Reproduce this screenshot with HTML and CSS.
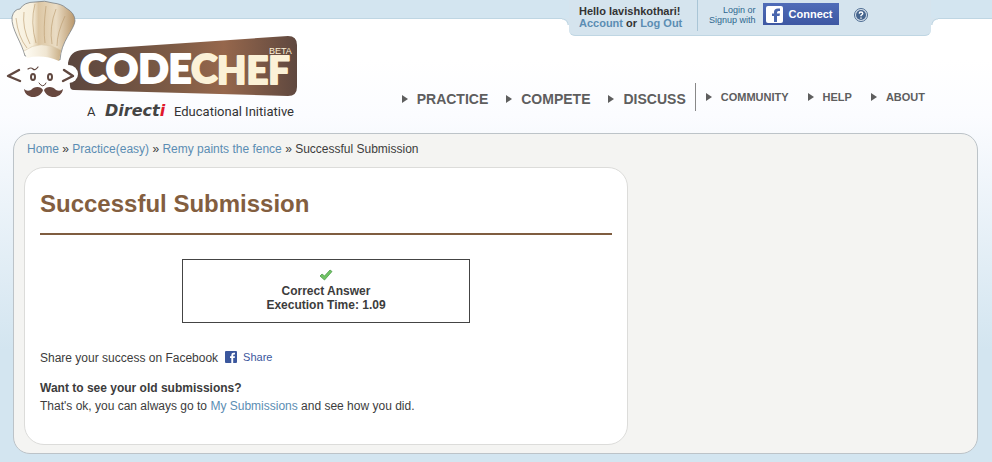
FILE: index.html
```html
<!DOCTYPE html>
<html lang="en">
<head>
<meta charset="utf-8">
<title>Successful Submission | CodeChef</title>
<link rel="stylesheet" href="styles.css">
</head>
<body>
<header class="header">
  <a class="logo" href="#" aria-label="CodeChef home">
    <svg width="305" height="125" viewBox="0 0 305 125">
      <defs>
        <linearGradient id="wood">
          <stop offset="0" stop-color="#5b463e"/>
          <stop offset=".45" stop-color="#7d5b45"/>
          <stop offset=".68" stop-color="#96674c"/>
          <stop offset="1" stop-color="#5f483f"/>
        </linearGradient>
        <linearGradient id="hat">
          <stop offset="0" stop-color="#fbf6e8"/>
          <stop offset=".33" stop-color="#f6eedb"/>
          <stop offset=".42" stop-color="#dcc6a3"/>
          <stop offset=".7" stop-color="#eadcc4"/>
          <stop offset="1" stop-color="#b9976b"/>
        </linearGradient>
        <linearGradient id="band">
          <stop offset="0" stop-color="#fffdf5"/>
          <stop offset=".6" stop-color="#f0e6d2"/>
          <stop offset="1" stop-color="#c9ae85"/>
        </linearGradient>
      </defs>
      <path d="M82 50 288 36Q297 36 297 45V87Q297 96 288 96L74 90Q70 90 70 86L68 63Q70 51 82 50Z" fill="url(#wood)"/>
      <circle cx="69" cy="74" r="9" fill="#fff"/>
      <ellipse cx="43" cy="73" rx="27" ry="18" fill="#fff"/>
      <path d="M25 56C22 43 11 29 12 17Q14 9 20 9Q24 2 35 2Q45 0 53 3Q62 4 66 8Q75 13 75 21C74 30 61 41 60 60Q44 52 25 56Z" fill="url(#hat)" stroke="#7c8185" stroke-width=".8"/>
      <path d="M24 51Q40 39 61 50L59 61Q43 54 27 58Z" fill="url(#band)"/>
      <path d="M24 51Q40 39 61 50" fill="none" stroke="#d9c8a8" stroke-width=".6"/>
      <path d="M16 18Q18 37 27 48M24 12Q22 28 30 44M35 4Q30 22 36 43M46 6Q43 29 45 43M56 9Q49 27 52 44M65 16Q57 33 57 46" fill="none" stroke="#b99a6d" stroke-width="1" opacity=".6"/>
      <g fill="none" stroke="#604840" stroke-linecap="round" stroke-linejoin="round">
        <path d="M19 70 8 76l12 5M64 70l9 6-10 5" stroke-width="2.4"/>
        <path d="M28 69q3-2 5 0t5-2" stroke-width="1.2"/>
        <ellipse cx="33" cy="77" rx="2" ry="3" stroke-width="2"/>
        <ellipse cx="50" cy="77" rx="2" ry="3" stroke-width="2"/>
        <path d="M39 83q4 6 7 0" stroke-width="1"/>
      </g>
      <path d="M43 90C41 86 34 86 31 90Q27 92 24 89C25 99 40 100 43 90ZM44 90C46 86 53 86 56 90Q60 92 63 89C62 99 47 100 44 90Z" fill="#68483f"/>
      <text class="logo-name" x="80" y="83" fill="#fff" stroke="#fff">CODE<tspan fill="#fbf1d7" stroke="#fbf1d7">C</tspan></text>
      <text class="logo-name logo-name-end" x="217" y="84" fill="#fbf1d7" stroke="#fbf1d7">HEF</text>
      <text class="logo-beta" x="269" y="54" fill="#fbf1d7">BETA</text>
      <text class="logo-line" x="87" y="116">A</text>
      <text class="logo-brand" x="105" y="116" fill="#444">Direct<tspan fill="#e0182d">i</tspan></text>
      <text class="logo-line" x="174" y="116">Educational Initiative</text>
    </svg>
  </a>
  <div class="header-side">
    <div class="account">
      <div class="greeting">Hello lavishkothari!<br><a href="#">Account</a> or <a href="#">Log Out</a></div>
      <div class="signup">
        <label class="signup-label" for="connect">Login or<br>Signup with</label>
        <button class="connect" id="connect" type="button">
          <svg width="17" height="17" viewBox="0 0 17 17" aria-hidden="true"><rect width="17" height="17" rx="2" fill="#fff"/><path d="M8 16V10H6V7.500H8V6Q8 2.500 12 2.500H14V5H12.500Q11 5 11 6.500V7.500H14L13.500 10H11V16Z" fill="#4a66ae"/></svg>
          Connect
        </button>
        <a class="help" href="#" aria-label="Help">
          <svg width="14" height="14" viewBox="0 0 14 14"><circle cx="7" cy="7" r="6.500" fill="#d8e2ec" stroke="#4d6c92"/><circle cx="7" cy="7" r="5" fill="#46658e"/><path d="M5.200 5.600Q5.300 4 7 4T8.800 5.500Q8.800 6.400 7 7.500V8.200M7 9.400V10.700" fill="none" stroke="#fff" stroke-width="1.400"/></svg>
        </a>
      </div>
    </div>
    <nav class="nav">
      <ul class="nav-main">
        <li><a href="#">PRACTICE</a></li>
        <li><a href="#">COMPETE</a></li>
        <li><a href="#">DISCUSS</a></li>
      </ul>
      <ul class="nav-more">
        <li><a href="#">COMMUNITY</a></li>
        <li><a href="#">HELP</a></li>
        <li><a href="#">ABOUT</a></li>
      </ul>
    </nav>
  </div>
</header>
<main class="main">
  <nav class="breadcrumb"><a href="#">Home</a> » <a href="#">Practice(easy)</a> » <a href="#">Remy paints the fence</a> » Successful Submission</nav>
  <section class="card">
    <h1>Successful Submission</h1>
    <div class="result">
      <svg width="14" height="12" viewBox="0 0 14 12" aria-hidden="true"><path d="M1 7 3 5 5.500 7 11 1 13 2.500 5.500 11Z" fill="#72c465" stroke="#4d9c4b" stroke-width=".8" stroke-linejoin="round"/></svg>
      <div>Correct Answer</div>
      <div>Execution Time: 1.09</div>
    </div>
    <p class="share">Share your success on Facebook
      <a class="share-link" href="#"><svg width="12" height="12" viewBox="0 0 12 12" aria-hidden="true"><rect width="12" height="12" rx="1" fill="#3b579d"/><path d="M6.300 12V7H5V5.200H6.300V4Q6.300 1.800 8.700 1.800H10V3.600H9Q8.200 3.600 8.200 4.300V5.200H10L9.700 7H8.200V12Z" fill="#fff"/></svg>Share</a>
    </p>
    <h2>Want to see your old submissions?</h2>
    <p>That's ok, you can always go to <a href="#">My Submissions</a> and see how you did.</p>
  </section>
</main>
</body>
</html>
```

FILE: styles.css
```css
* {
  box-sizing: border-box;
}

body {
  margin: 0;
  padding-bottom: 8px;
  font: 12px/18px "Liberation Sans", Arial, sans-serif;
  color: #3c3c3c;
  background: #d3e5f0 linear-gradient(#fff 60px, #fbfcff 116px, #f1f6fb 175px, #d3e5f0 350px) no-repeat 0 0 / 100% 350px;
}

a {
  color: #5b8db3;
  text-decoration: none;
}

h1, h2, p, ul {
  margin: 0;
  padding: 0;
}

ul {
  list-style: none;
}

/* Header */
.header {
  display: flex;
  justify-content: space-between;
  min-height: 133px;
  background: linear-gradient(#d3e5f0 18px, #bfd6e3 18px, #bfd6e3 19px, transparent 19px);
}

.logo svg {
  display: block;
}

.logo-name {
  font: 900 40px Lato, sans-serif;
  stroke-width: 2px;
  stroke-linejoin: round;
}

.logo-name-end {
  font-size: 38px;
}

.logo-beta {
  font: 9px "Liberation Sans", sans-serif;
}

.logo-line {
  font: 13px Roboto, sans-serif;
  fill: #333;
}

.logo-brand {
  font: italic bold 16px "DejaVu Sans", sans-serif;
}

.header-side {
  display: flex;
  flex-direction: column;
  align-items: flex-end;
  padding-right: 61px;
}

.account {
  position: relative;
  display: flex;
  width: 362px;
  height: 36px;
  padding-left: 10px;
  background: #d5e4ee;
  border-bottom: 1px solid #bfd6e3;
  border-radius: 0 0 6px 6px;
}

.account::before,
.account::after {
  content: "";
  position: absolute;
  top: 18px;
  width: 7px;
  height: 7px;
}

.account::before {
  left: -7px;
  background: radial-gradient(circle at 0 100%, #fff 5px, #bfd6e3 6px, #d5e4ee 7px);
}

.account::after {
  right: -7px;
  background: radial-gradient(circle at 100% 100%, #fff 5px, #bfd6e3 6px, #d5e4ee 7px);
}

.greeting {
  width: 119px;
  height: 31px;
  padding-top: 5px;
  font-size: 11px;
  font-weight: bold;
  line-height: 12px;
  color: #333;
  border-right: 1px solid #a9c5d6;
}

.signup {
  display: flex;
  flex: 1;
  align-items: flex-start;
  padding: 3px 0 0 11px;
}

.signup-label {
  margin: 2px 7px 0 0;
  font-size: 9px;
  line-height: 10px;
  text-align: right;
  color: #2f678f;
}

.connect {
  display: flex;
  align-items: center;
  gap: 6px;
  height: 22px;
  padding: 0 6px 0 3px;
  font: bold 11px "Liberation Sans", Arial, sans-serif;
  color: #fff;
  background: linear-gradient(#4f6cb8, #3d57a2);
  border: 0;
}

.help {
  margin: 5px 0 0 15px;
}

.help svg {
  display: block;
}

/* Navigation */
.nav {
  display: flex;
  margin: 47px 6px 0 0;
  font-weight: bold;
}

.nav ul {
  display: flex;
}

.nav a {
  display: flex;
  align-items: center;
  gap: 9px;
  color: #5e5e5e;
}

.nav a::before {
  content: "";
  border: solid transparent;
  border-width: 4px 0 4px 6px;
  border-left-color: #5e5e5e;
}

.nav-main {
  gap: 18px;
  height: 28px;
  padding: 7px 9px 0 0;
  font-size: 14px;
  border-right: 1px solid #888;
}

.nav-more {
  gap: 19px;
  padding: 5px 0 0 10px;
  font-size: 11px;
}

/* Content */
.main {
  min-height: 321px;
  margin: 0 14px 0 13px;
  padding: 7px 11px 8px 10px;
  background: #f4f4f2;
  border: 1px solid #bcc3c8;
  border-radius: 17px;
}

.breadcrumb {
  padding-left: 3px;
  margin-bottom: 10px;
  line-height: 16px;
}

.card {
  max-width: 604px;
  padding: 22px 15px 29px;
  background: #fff;
  border: 1px solid #dcdcda;
  border-radius: 20px;
}

h1 {
  padding-bottom: 15px;
  font-size: 24px;
  line-height: 28px;
  color: #835e3f;
  border-bottom: 2px solid #7f5d40;
}

h2 {
  font-size: 12px;
}

.result {
  width: 288px;
  max-width: 100%;
  margin: 24px auto 26px;
  padding: 9px 0 10px;
  font-weight: bold;
  line-height: 14px;
  text-align: center;
  border: 1px solid #444;
}

.result svg {
  display: block;
  margin: 0 auto 3px;
}

.share {
  display: flex;
  gap: 7px;
  margin-bottom: 12px;
}

.share-link {
  display: flex;
  align-items: center;
  gap: 6px;
  height: 16px;
  font-size: 11px;
  color: #3b579d;
}
```
